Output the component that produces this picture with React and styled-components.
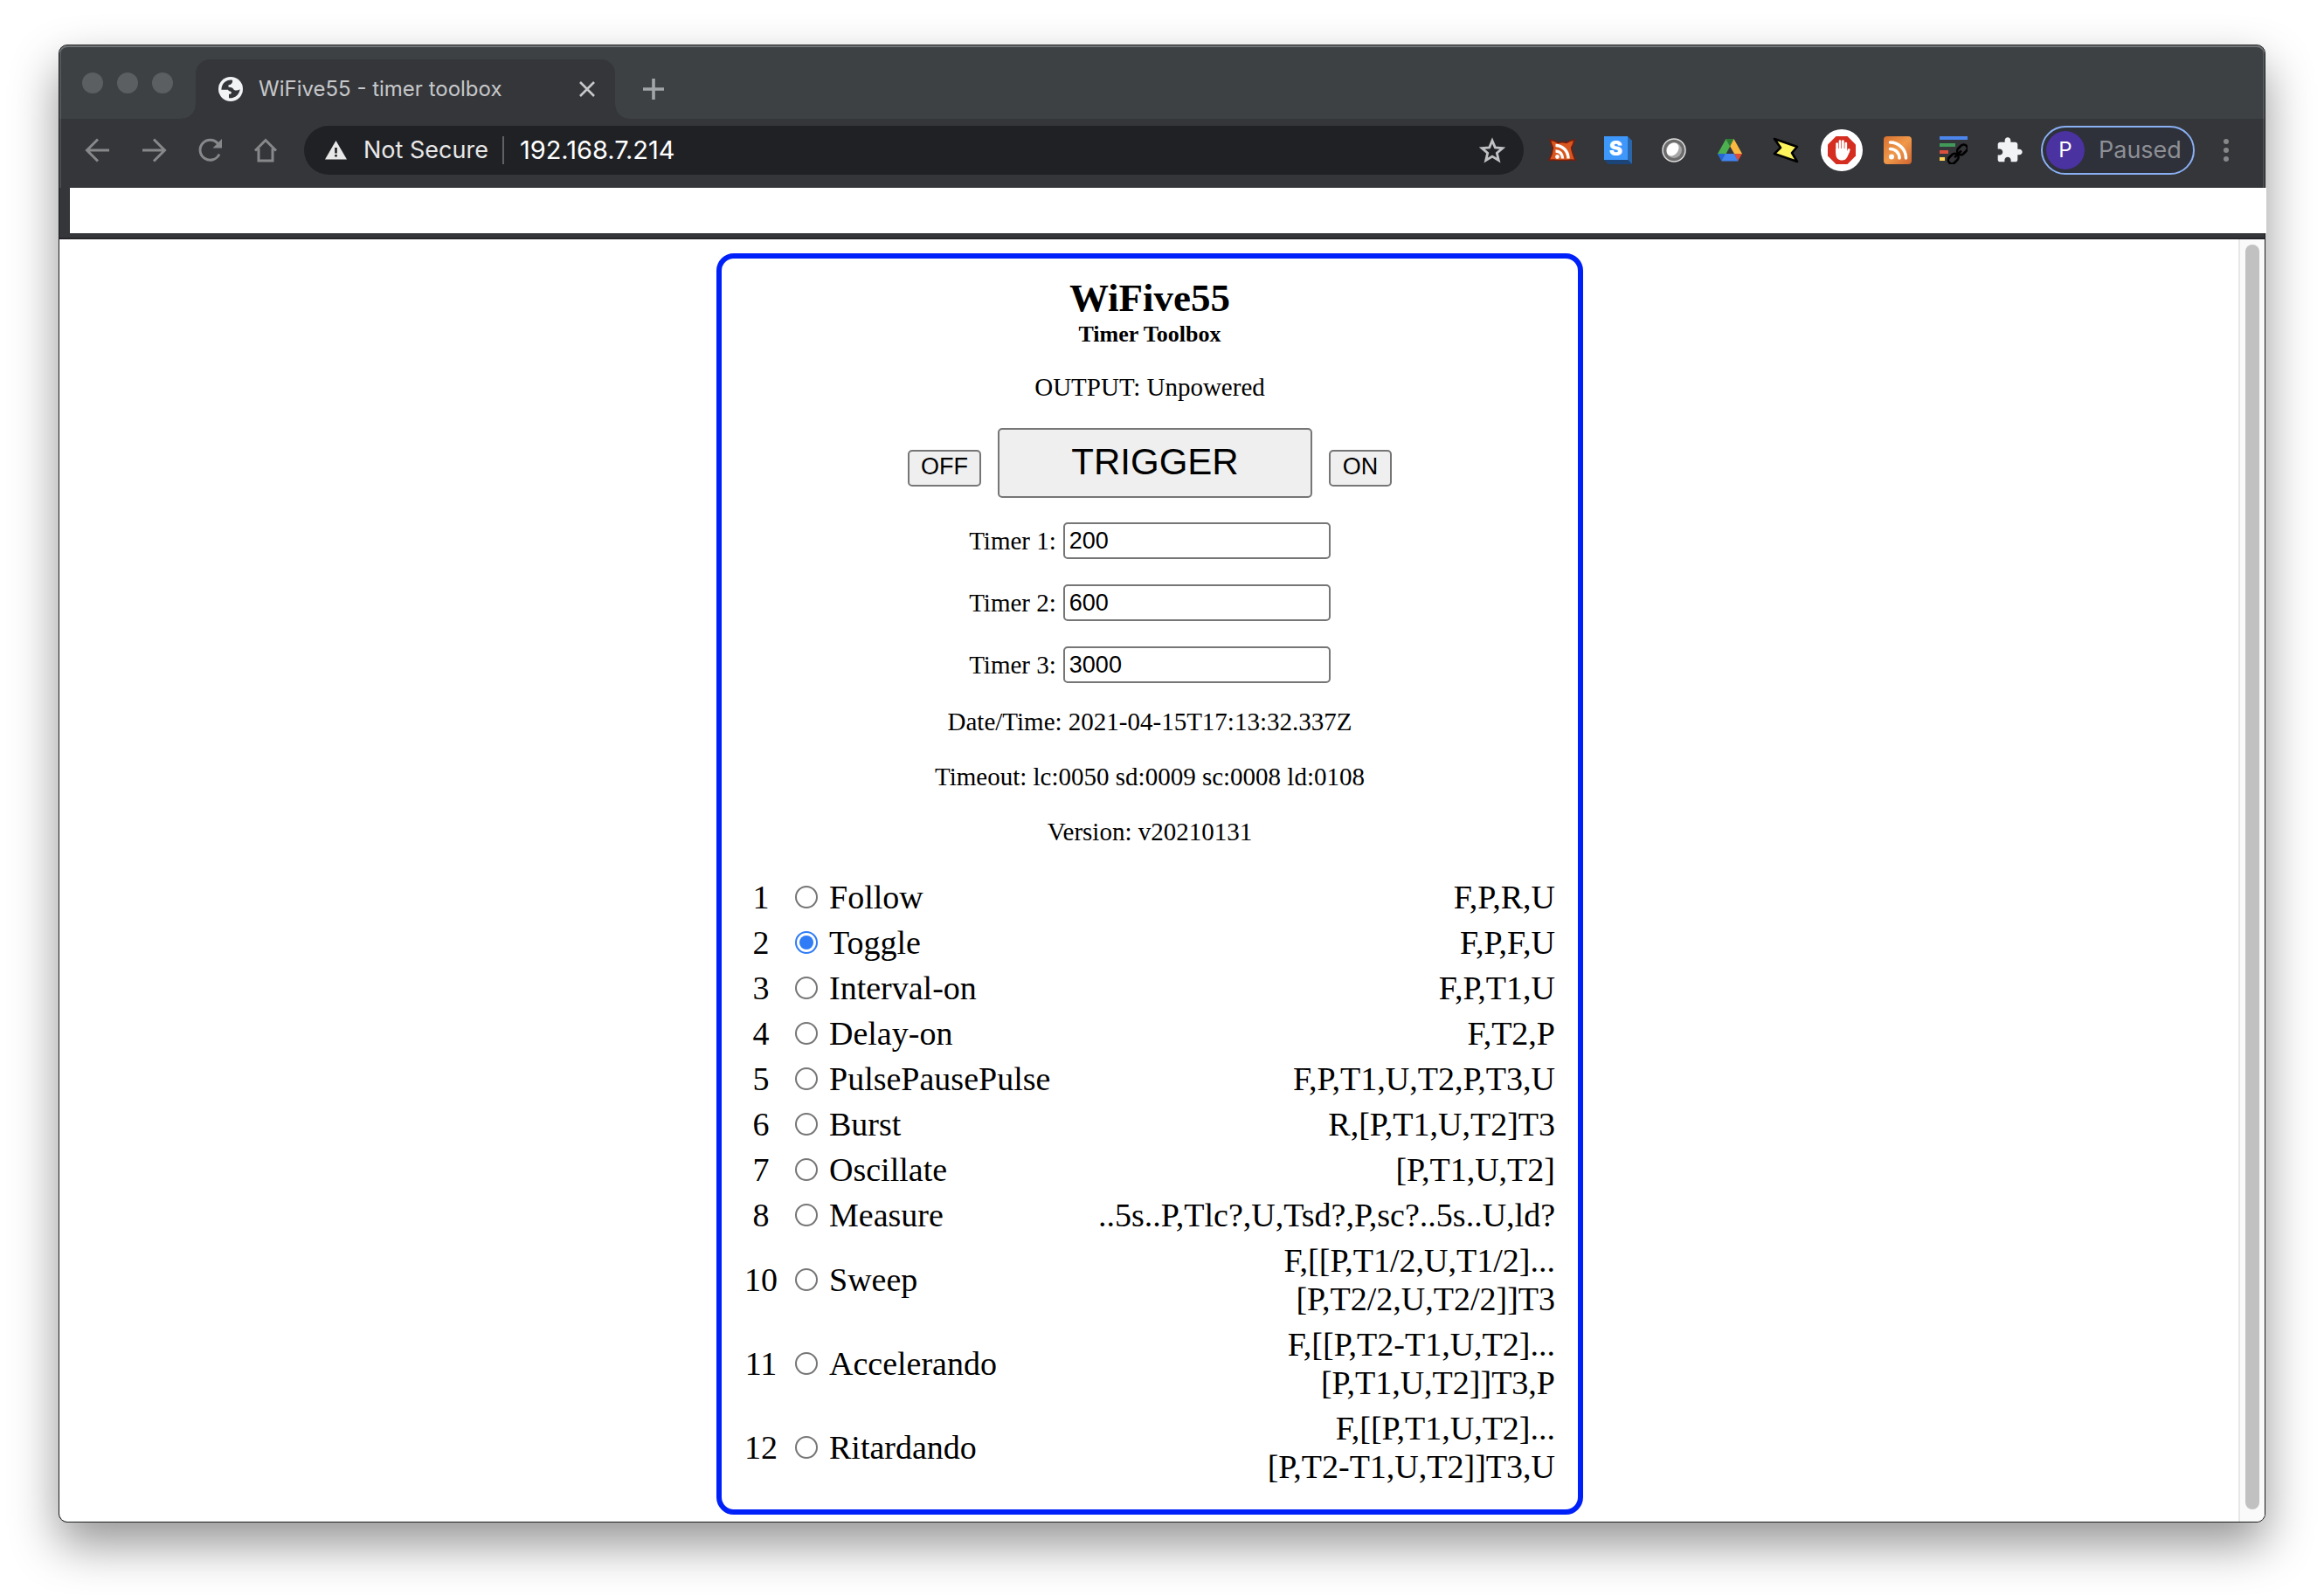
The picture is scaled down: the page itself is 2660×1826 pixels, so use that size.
import React, { useState } from "react";
import styled, { createGlobalStyle } from "styled-components";

const UI_FONT = `Inter, Roboto, "Liberation Sans", sans-serif`;
const SERIF = `"Liberation Serif", "Times New Roman", serif`;
const SANS = `"Liberation Sans", Arial, sans-serif`;

const GlobalStyle = createGlobalStyle`
  *, *::before, *::after { box-sizing: border-box; }
  body { margin: 0; background: #fff; }
  button, input { margin: 0; padding: 0; }
`;

const Desktop = styled.div`
  display: flex;
  min-height: 100vh;
  padding: 51px 67px 83px;
`;

const Window = styled.div`
  flex: 1;
  min-width: 0;
  display: flex;
  flex-direction: column;
  border: 1px solid #1c1d1f;
  border-radius: 10px;
  background: #35363a;
  box-shadow: 0 25px 54px rgba(0, 0, 0, 0.42);
`;

const TabStrip = styled.header`
  display: flex;
  align-items: flex-end;
  height: 84px;
  border-radius: 9px 9px 0 0;
  background: #3d4143;
  box-shadow: inset 0 2px 0 #717577, inset 2px 0 0 #53575a, inset -2px 0 0 #53575a;
`;

const Lights = styled.div`
  display: flex;
  align-items: center;
  align-self: stretch;
  gap: 16px;
  padding: 2px 26px 0;
`;

const Light = styled.span`
  width: 24px;
  height: 24px;
  border-radius: 50%;
  background: #5c5f62;
`;

const Tab = styled.div`
  position: relative;
  display: flex;
  align-items: center;
  gap: 18px;
  width: 480px;
  height: 68px;
  padding: 0 18px 0 26px;
  border-radius: 16px 16px 0 0;
  background: #35363a;

  &::before,
  &::after {
    content: "";
    position: absolute;
    bottom: 0;
    width: 16px;
    height: 16px;
  }
  &::before {
    right: 100%;
    background: radial-gradient(circle at 0 0, transparent 15px, #35363a 16px);
  }
  &::after {
    left: 100%;
    background: radial-gradient(circle at 100% 0, transparent 15px, #35363a 16px);
  }
`;

const TabTitle = styled.span`
  flex: 1;
  color: #c6c8ca;
  font: 24px/32px ${UI_FONT};
  white-space: nowrap;
`;

const IconButton = styled.button`
  display: flex;
  align-items: center;
  justify-content: center;
  flex: none;
  width: ${(p) => p.$width || 64}px;
  height: ${(p) => p.$height || 56}px;
  border: 0;
  background: none;
  color: ${(p) => p.$color || "#87888a"};
  cursor: pointer;

  svg { display: block; }
`;

const NewTab = styled(IconButton)`
  margin-left: 12px;
`;

const Toolbar = styled.nav`
  display: flex;
  padding: 8px 12px 15px;
  background: #35363a;
  box-shadow: inset 2px 0 0 #4c4d51, inset -2px 0 0 #4c4d51;
`;

const Omnibox = styled.div`
  flex: 1;
  display: flex;
  align-items: center;
  height: 56px;
  margin: 0 12px;
  padding: 0 4px 0 24px;
  border-radius: 28px;
  background: #202124;
`;

const Security = styled.button`
  display: flex;
  align-items: center;
  gap: 19px;
  padding-right: 16px;
  border: 0;
  border-right: 2px solid #5f6165;
  background: none;
  color: #e8e8e9;
  font: 27px/32px ${UI_FONT};
  white-space: nowrap;
`;

const Address = styled.input`
  flex: 1;
  min-width: 0;
  padding-left: 18px;
  border: 0;
  outline: 0;
  background: none;
  color: #fff;
  font: 29px/32px ${UI_FONT};
`;

const Profile = styled.button`
  display: flex;
  align-items: center;
  gap: 16px;
  width: 176px;
  height: 56px;
  margin: 0 4px;
  padding: 0 4px;
  border: 2px solid #8ab0f4;
  border-radius: 28px;
  background: #2e303a;
  color: #8d8f94;
  font: 27px/32px ${UI_FONT};
`;

const Avatar = styled.span`
  width: 44px;
  height: 44px;
  border-radius: 50%;
  background: #4a32a0;
  color: #fff;
  font: 24px/44px ${UI_FONT};
  text-align: center;
`;

const BookmarkBar = styled.div`
  height: 52px;
  margin: 0 -2px 0 12px;
  background: #fff;
`;

const ChromeEdge = styled.div`
  height: 7px;
  border-bottom: 2px solid #26262a;
  background: #35363a;
`;

const Viewport = styled.div`
  flex: 1;
  display: flex;
  border-radius: 0 0 9px 9px;
  background: #fff;
`;

const Page = styled.main`
  flex: 1;
  min-width: 0;
  display: flex;
  justify-content: center;
  align-items: flex-start;
  padding: 16px 6px 8px 8px;
  color: #000;
  font: 29px/34px ${SERIF};
`;

const ScrollTrack = styled.div`
  display: flex;
  width: 30px;
  padding: 6px 6px 14px;
  border-left: 2px solid #e7e7e7;
  border-radius: 0 0 9px 0;
  background: #fafafa;
`;

const ScrollThumb = styled.div`
  flex: 1;
  border-radius: 8px;
  background: #c1c1c1;
`;

const Card = styled.section`
  display: flex;
  flex-direction: column;
  align-items: center;
  width: 100%;
  max-width: 992px;
  padding: 20px 26px 23px;
  border: 6px solid #0020fa;
  border-radius: 20px;
`;

const Title = styled.h1`
  margin: 0;
  font-size: 45px;
  line-height: 50px;
`;

const Subtitle = styled.h2`
  margin: 0;
  font-size: 26px;
  line-height: 34px;
`;

const Line = styled.p`
  margin: ${(p) => p.$top}px 0 0;
`;

const Controls = styled.div`
  display: flex;
  align-items: baseline;
  gap: 19px;
  margin-top: 30px;
`;

const PushButton = styled.button`
  width: ${(p) => p.$width}px;
  height: ${(p) => (p.$large ? 80 : 42)}px;
  padding-bottom: 2px;
  border: 2px solid #767676;
  border-radius: 5px;
  background: #efefef;
  color: #000;
  font-family: ${SANS};
  font-size: ${(p) => (p.$large ? 42 : 27)}px;
`;

const Timers = styled.div`
  display: flex;
  flex-direction: column;
  gap: 29px;
  margin-top: 28px;
`;

const TimerRow = styled.div`
  display: flex;
  align-items: center;
  gap: 8px;
`;

const TimerInput = styled.input`
  width: 306px;
  height: 42px;
  padding: 0 5px;
  border: 2px solid #767676;
  border-radius: 5px;
  background: #fff;
  color: #000;
  font: 27px/32px ${SANS};
`;

const Modes = styled.table`
  width: 100%;
  margin-top: 32px;
  border-spacing: 0;
  font-size: 38px;
  line-height: 44px;
`;

const Cell = styled.td`
  width: ${(p) => p.$width || "auto"};
  padding: 4px 0;
  text-align: ${(p) => p.$align || "left"};
  white-space: pre-line;
`;

const ModeLabel = styled.label`
  display: flex;
  align-items: center;
  gap: 13px;
  padding-left: 20px;
`;

const Radio = styled.input`
  appearance: none;
  width: 26px;
  height: 26px;
  padding: 3px;
  border: 2px solid #767676;
  border-radius: 50%;
  background: #fff content-box;

  &:checked {
    border-color: #2f7cf6;
    background-color: #2f7cf6;
  }
`;

const Stroke = ({ size = 32, width = 3, children }) => (
  <svg width={size} height={size} viewBox="0 0 32 32" fill="none" stroke="currentColor" strokeWidth={width}>
    {children}
  </svg>
);

const Globe = () => (
  <svg width="28" height="28" viewBox="0 0 28 28">
    <circle cx="14" cy="14" r="14" fill="#f1f3f4" />
    <path
      d="M16 3.800C10 2.500 3.500 7 3.400 14.800H11c.8 2 3.200 1.400 3.700 2.800.5 1.500-.6 2.200-2.700 2.200V24.300c6.500.7 12-3.800 12.600-10-2.600 1.600-5 1.700-6.900.4-1-2.400-3.400-3.200-6.200-3V9.300c2.900-.3 5.200-2 4.500-5.500z"
      fill="#35363a"
    />
  </svg>
);

const Warning = () => (
  <svg width="25" height="22" viewBox="0 0 25 22">
    <path d="M12.500 0 25 21.500H0z" fill="#e8e8e9" />
    <path d="M11.200 8h2.600v6.500h-2.600zM11.200 16h2.600v2.600h-2.600z" fill="#202124" />
  </svg>
);

const FoxFeed = () => (
  <svg width="32" height="28" viewBox="0 0 32 28">
    <path d="M2 2c4 .5 7 2 9 3.500 3-1 7-1 10 0C23 4 26 2.500 30 2c-1 4-2 7-3.500 9 .5 4 2 8 4.500 14.500-4-.5-6-1-8.500 0h-13c-3-1-5-.5-8.500 0C3.500 21 5 17 5.500 11 4 8 3 5 2 2z" fill="#d9571f" stroke="#7a1d0b" strokeWidth="1.500" />
    <g fill="none" stroke="#fff" strokeWidth="3.400">
      <path d="M8.500 8.500c8 0 14.500 6.500 14.500 15" />
      <path d="M8.500 15c5 0 8 3.500 8 8.500" />
    </g>
    <circle cx="10.500" cy="21.500" r="2.400" fill="#fff" />
  </svg>
);

const CubeS = () => (
  <svg width="32" height="32" viewBox="0 0 32 32">
    <path d="M27 0l5 5v27l-5-5z" fill="#2a66ab" />
    <path d="M0 27h27l5 5H5z" fill="#1b4478" />
    <path d="M0 0h27v27H0z" fill="#3e98fc" />
    <text x="13.500" y="22" textAnchor="middle" fontFamily="Inter, sans-serif" fontWeight="900" fontSize="23" fill="#fff">S</text>
  </svg>
);

const Orb = () => (
  <svg width="28" height="28" viewBox="0 0 28 28">
    <circle cx="14" cy="14" r="13" fill="#6c6c6c" stroke="#dedede" strokeWidth="1.500" />
    <circle cx="14" cy="14" r="9" fill="#a6a6a6" />
    <path d="M6 17C4.500 11 9 5.500 14 5.500c3 0 5 2 5.500 4.500.5 5-4 10.500-9 10.500-2 0-4-1.500-4.500-3.500z" fill="#fff" />
  </svg>
);

const Drive = () => (
  <svg width="28" height="26" viewBox="0 0 28 26">
    <path d="M9.500 0h9l-4.300 8.500z" fill="#2b7d33" />
    <path d="M9.500 0l4.700 8.500L5 25.500 0 17z" fill="#4caf50" />
    <path d="M18.500 0L28 17h-9l-4.800-8.500z" fill="#f9b941" />
    <path d="M19 17h9l-5 8.500z" fill="#e14a36" />
    <path d="M0 17h9l-4.500 8.500z" fill="#2565d6" />
    <path d="M9 17h10l4.500 8.500h-19z" fill="#4284f0" />
  </svg>
);

const Bolt = () => (
  <svg width="32" height="32" viewBox="0 0 32 32">
    <path d="M3 3l26 9-6 7 6 10L3 20l7-7z" fill="#fdf35c" stroke="#000" strokeWidth="2.600" strokeLinejoin="round" />
  </svg>
);

const StopHand = () => (
  <svg width="48" height="48" viewBox="0 0 48 48">
    <circle cx="24" cy="24" r="24" fill="#fff" />
    <path d="M17.500 8h13L40 17.500v13L30.500 40h-13L8 30.500v-13z" fill="#d52d20" />
    <g stroke="#fff" strokeWidth="2.700" strokeLinecap="round">
      <path d="M18.600 16.500V27M22 13.500V26M25.400 13.500V26M28.800 16V27M32.300 23.500L29 31" />
    </g>
    <path d="M17.250 22h12.900v5.500l1.800-3 1.200 1-2.900 6c-1.300 3-3.300 4-5.700 4-4.500 0-7.300-2.500-7.300-7.500z" fill="#fff" />
  </svg>
);

const Feed = () => (
  <svg width="32" height="32" viewBox="0 0 32 32">
    <defs>
      <linearGradient id="feed" x1="0" y1="0" x2="1" y2="1">
        <stop offset="0" stopColor="#d8702f" />
        <stop offset="0.500" stopColor="#f0994a" />
        <stop offset="1" stopColor="#cf6430" />
      </linearGradient>
    </defs>
    <rect width="32" height="32" rx="4" fill="url(#feed)" />
    <g fill="none" stroke="#fff" strokeWidth="3.600" strokeLinecap="round">
      <path d="M7.500 7c10 0 18 8 18 18" />
      <path d="M7.500 14.500c6 0 10.500 4.500 10.500 10.500" />
    </g>
    <circle cx="9" cy="23.500" r="3" fill="#fff" />
  </svg>
);

const LinkLines = () => (
  <svg width="32" height="32" viewBox="0 0 32 32">
    <path d="M0 0h32v4H0z" fill="#4c86ec" />
    <path d="M0 8h18v4H0z" fill="#429a5a" />
    <path d="M0 16h10v4H0z" fill="#d9503f" />
    <path d="M0 24h6v4H0z" fill="#fbd153" />
    <g fill="none" stroke="#000" strokeWidth="2.600" transform="rotate(-45 20.500 20.500)">
      <rect x="7" y="16.500" width="13" height="8.500" rx="4.200" />
      <rect x="21.500" y="16.500" width="13" height="8.500" rx="4.200" />
      <path d="M15.500 20.800h11" />
    </g>
  </svg>
);

const Puzzle = () => (
  <svg width="32" height="32" viewBox="0 0 24 24" fill="#f1f3f4">
    <path d="M20.500 11H19V7c0-1.100-.9-2-2-2h-4V3.500C13 2.120 11.880 1 10.500 1S8 2.120 8 3.500V5H4c-1.100 0-1.990.9-1.990 2v3.800H3.500c1.490 0 2.700 1.210 2.700 2.700s-1.210 2.700-2.700 2.700H2V20c0 1.100.9 2 2 2h3.800v-1.500c0-1.490 1.210-2.700 2.700-2.700s2.700 1.210 2.700 2.700V22H17c1.100 0 2-.9 2-2v-4h1.500c1.380 0 2.500-1.120 2.500-2.500S21.880 11 20.500 11z" />
  </svg>
);

const EXTENSIONS = [
  ["Feed finder", FoxFeed],
  ["S extension", CubeS],
  ["Orb", Orb],
  ["Drive", Drive],
  ["Bolt", Bolt],
  ["Ad blocker", StopHand],
  ["RSS", Feed],
  ["Link tools", LinkLines],
  ["Extensions", Puzzle],
];

const MODES = [
  [1, "Follow", "F,P,R,U"],
  [2, "Toggle", "F,P,F,U"],
  [3, "Interval-on", "F,P,T1,U"],
  [4, "Delay-on", "F,T2,P"],
  [5, "PulsePausePulse", "F,P,T1,U,T2,P,T3,U"],
  [6, "Burst", "R,[P,T1,U,T2]T3"],
  [7, "Oscillate", "[P,T1,U,T2]"],
  [8, "Measure", "..5s..P,Tlc?,U,Tsd?,P,sc?..5s..U,ld?"],
  [10, "Sweep", "F,[[P,T1/2,U,T1/2]...\n[P,T2/2,U,T2/2]]T3"],
  [11, "Accelerando", "F,[[P,T2-T1,U,T2]...\n[P,T1,U,T2]]T3,P"],
  [12, "Ritardando", "F,[[P,T1,U,T2]...\n[P,T2-T1,U,T2]]T3,U"],
];

function BrowserChrome() {
  return (
    <>
      <TabStrip>
        <Lights>
          <Light />
          <Light />
          <Light />
        </Lights>
        <Tab>
          <Globe />
          <TabTitle>WiFive55 - timer toolbox</TabTitle>
          <IconButton $width={28} $height={28} $color="#c6c8ca" aria-label="Close tab">
            <svg width="18" height="18" viewBox="0 0 18 18" stroke="currentColor" strokeWidth="2.600">
              <path d="M1 1l16 16M17 1L1 17" />
            </svg>
          </IconButton>
        </Tab>
        <NewTab $height={68} $color="#a3a6a8" aria-label="New tab">
          <svg width="24" height="24" viewBox="0 0 24 24" stroke="currentColor" strokeWidth="3.600">
            <path d="M12 0v24M0 12h24" />
          </svg>
        </NewTab>
      </TabStrip>
      <Toolbar>
        <IconButton aria-label="Back">
          <Stroke><path d="M29 16H4.500M16 3.500L3.500 16 16 28.500" /></Stroke>
        </IconButton>
        <IconButton aria-label="Forward">
          <Stroke><path d="M3 16h24.500M16 3.500L28.500 16 16 28.500" /></Stroke>
        </IconButton>
        <IconButton aria-label="Reload">
          <Stroke>
            <path d="M27 20.500A11.500 11.500 0 1 1 25.500 8.500" />
            <path d="M30 3v10.500H19.500z" fill="currentColor" stroke="none" />
          </Stroke>
        </IconButton>
        <IconButton aria-label="Home">
          <Stroke><path d="M4 16.500L16 4.500l12 12M8 14v14h16V14" /></Stroke>
        </IconButton>
        <Omnibox>
          <Security>
            <Warning />
            Not Secure
          </Security>
          <Address aria-label="Address" defaultValue="192.168.7.214" />
          <IconButton $color="#c0c1c3" aria-label="Bookmark this page">
            <svg width="30" height="30" viewBox="0 0 30 30" fill="none" stroke="currentColor" strokeWidth="2.800">
              <path d="M15 4l3.300 7.900 8.500.7-6.500 5.600 2 8.300L15 22.100l-7.300 4.400 2-8.300-6.500-5.600 8.500-.7z" />
            </svg>
          </IconButton>
        </Omnibox>
        {EXTENSIONS.map(([name, Icon]) => (
          <IconButton key={name} aria-label={name}>
            <Icon />
          </IconButton>
        ))}
        <Profile>
          <Avatar>P</Avatar>
          Paused
        </Profile>
        <IconButton aria-label="Menu">
          <svg width="6" height="26" viewBox="0 0 6 26" fill="currentColor">
            <circle cx="3" cy="3" r="3" />
            <circle cx="3" cy="13" r="3" />
            <circle cx="3" cy="23" r="3" />
          </svg>
        </IconButton>
      </Toolbar>
      <BookmarkBar />
      <ChromeEdge />
    </>
  );
}

function TimerToolbox() {
  const [mode, setMode] = useState(2);
  return (
    <Card>
      <Title>WiFive55</Title>
      <Subtitle>Timer Toolbox</Subtitle>
      <Line $top={26}>OUTPUT: Unpowered</Line>
      <Controls>
        <PushButton $width={84}>OFF</PushButton>
        <PushButton $width={360} $large>TRIGGER</PushButton>
        <PushButton $width={72}>ON</PushButton>
      </Controls>
      <Timers>
        {["200", "600", "3000"].map((value, i) => (
          <TimerRow key={i}>
            <label htmlFor={`timer${i + 1}`}>Timer {i + 1}:</label>
            <TimerInput id={`timer${i + 1}`} defaultValue={value} />
          </TimerRow>
        ))}
      </Timers>
      <Line $top={27}>Date/Time: 2021-04-15T17:13:32.337Z</Line>
      <Line $top={29}>Timeout: lc:0050 sd:0009 sc:0008 ld:0108</Line>
      <Line $top={29}>Version: v20210131</Line>
      <Modes>
        <tbody>
          {MODES.map(([id, name, program]) => (
            <tr key={id}>
              <Cell $width="38px" $align="center">{id}</Cell>
              <Cell>
                <ModeLabel>
                  <Radio
                    type="radio"
                    name="mode"
                    checked={mode === id}
                    onChange={() => setMode(id)}
                  />
                  {name}
                </ModeLabel>
              </Cell>
              <Cell $align="right">{program}</Cell>
            </tr>
          ))}
        </tbody>
      </Modes>
    </Card>
  );
}

export default function App() {
  return (
    <>
      <GlobalStyle />
      <Desktop>
        <Window>
          <BrowserChrome />
          <Viewport>
            <Page>
              <TimerToolbox />
            </Page>
            <ScrollTrack>
              <ScrollThumb />
            </ScrollTrack>
          </Viewport>
        </Window>
      </Desktop>
    </>
  );
}
